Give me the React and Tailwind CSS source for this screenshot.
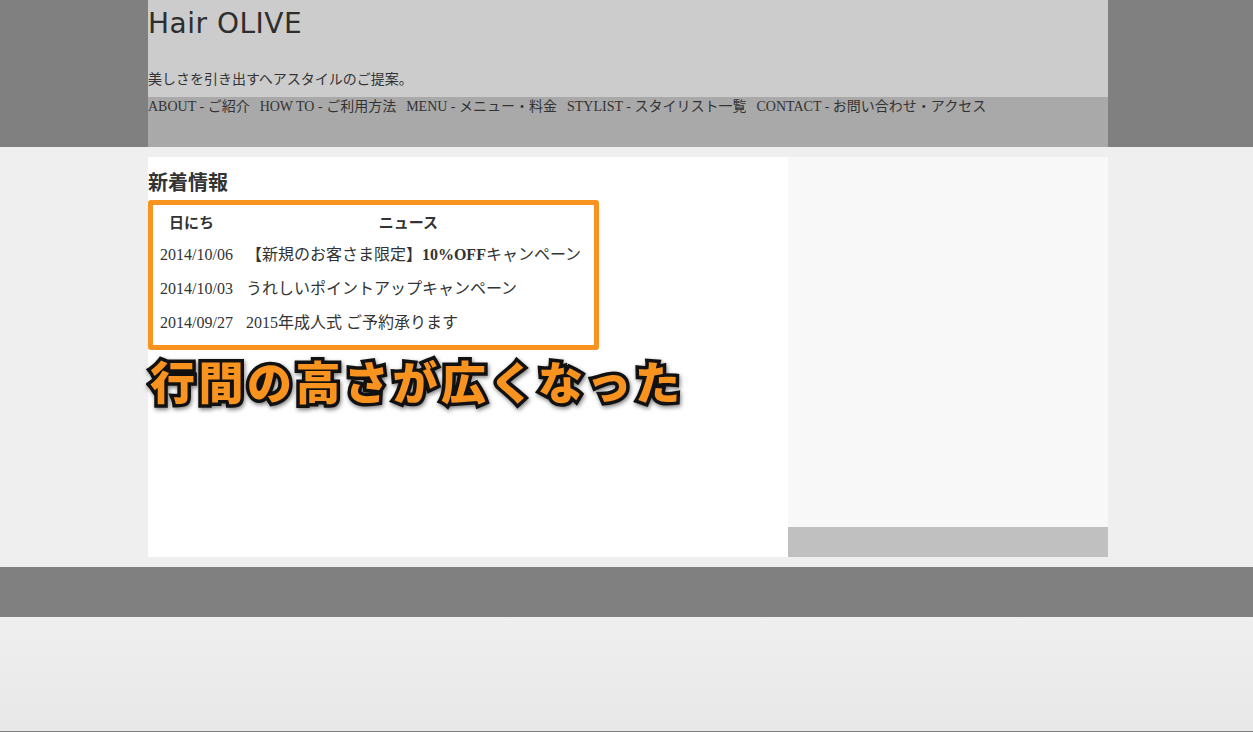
import React from "react";

const serif = "font-['Liberation_Serif','Noto_Sans_CJK_JP',serif]";

const navItems = [
  "ABOUT - ご紹介",
  "HOW TO - ご利用方法",
  "MENU - メニュー・料金",
  "STYLIST - スタイリスト一覧",
  "CONTACT - お問い合わせ・アクセス",
];

const news = [
  { date: "2014/10/06", body: <>【新規のお客さま限定】<b>10%OFF</b>キャンペーン</> },
  { date: "2014/10/03", body: "うれしいポイントアップキャンペーン" },
  { date: "2014/09/27", body: "2015年成人式 ご予約承ります" },
];

export default function App() {
  return (
    <div className={`h-[732px] flex flex-col bg-[#efefef] text-[#333] ${serif}`}>
      {/* header */}
      <header className="bg-[#808080]">
        <div className="w-[960px] ml-[148px]">
          <div className="bg-[#cccccc] h-[97px] flex flex-col">
            <h1 className="font-['DejaVu_Sans',sans-serif] text-[28px] leading-none tracking-[0.5px] text-[#2e2e2e] pt-[10px]">Hair OLIVE</h1>
            <p className="text-[14px] leading-none mt-auto mb-[10px]">美しさを引き出すヘアスタイルのご提案。</p>
          </div>
          <nav className="bg-[#a9a9a9] h-[50px]">
            <ul className="flex gap-[10px] text-[14px] leading-[18px] pt-[1px]">
              {navItems.map((n) => <li key={n}>{n}</li>)}
            </ul>
          </nav>
        </div>
      </header>

      {/* content */}
      <main className="w-[960px] ml-[148px] mt-[10px] flex h-[400px]">
        <section className="w-[640px] bg-white">
          <h2 className="text-[20px] font-bold leading-none mt-[16px] mb-[7px]">新着情報</h2>
          <div className="w-[451px] border-[5px] border-[#f7931e] rounded-[3px]">
            <table className="text-[16px] mb-[5px]">
              <thead>
                <tr className="h-[33px]">
                  <th className="pl-[2px] pr-[18px] pt-[4px] font-bold text-[15px]">日にち</th>
                  <th className="pr-[10px] pt-[4px] font-bold text-[15px]">ニュース</th>
                </tr>
              </thead>
              <tbody>
                {news.map((r) => (
                  <tr key={r.date} className="h-[34px]">
                    <td className="pl-[7px] pr-[13px]">{r.date}</td>
                    <td>{r.body}</td>
                  </tr>
                ))}
              </tbody>
            </table>
          </div>
          <p className="mt-[3px] ml-[2px] font-['Noto_Sans_CJK_JP',sans-serif] font-black text-[45px] leading-[56px] tracking-[3.5px] text-[#f7931e] [-webkit-text-stroke:7px_#111] [paint-order:stroke_fill] [filter:drop-shadow(1px_2px_2px_rgba(0,0,0,0.5))]">
            行間の高さが広くなった
          </p>
        </section>
        <aside className="w-[320px] flex flex-col">
          <div className="flex-1 bg-[#f8f8f8]" />
          <div className="h-[30px] bg-[#c0c0c0]" />
        </aside>
      </main>

      {/* footer */}
      <footer className="mt-[10px] h-[50px] bg-[#808080]" />
      <div className="flex-1 bg-gradient-to-b from-[#efefef] to-[#e8e8e8]" />
      <div className="h-[1px] bg-[#808080]" />
    </div>
  );
}
